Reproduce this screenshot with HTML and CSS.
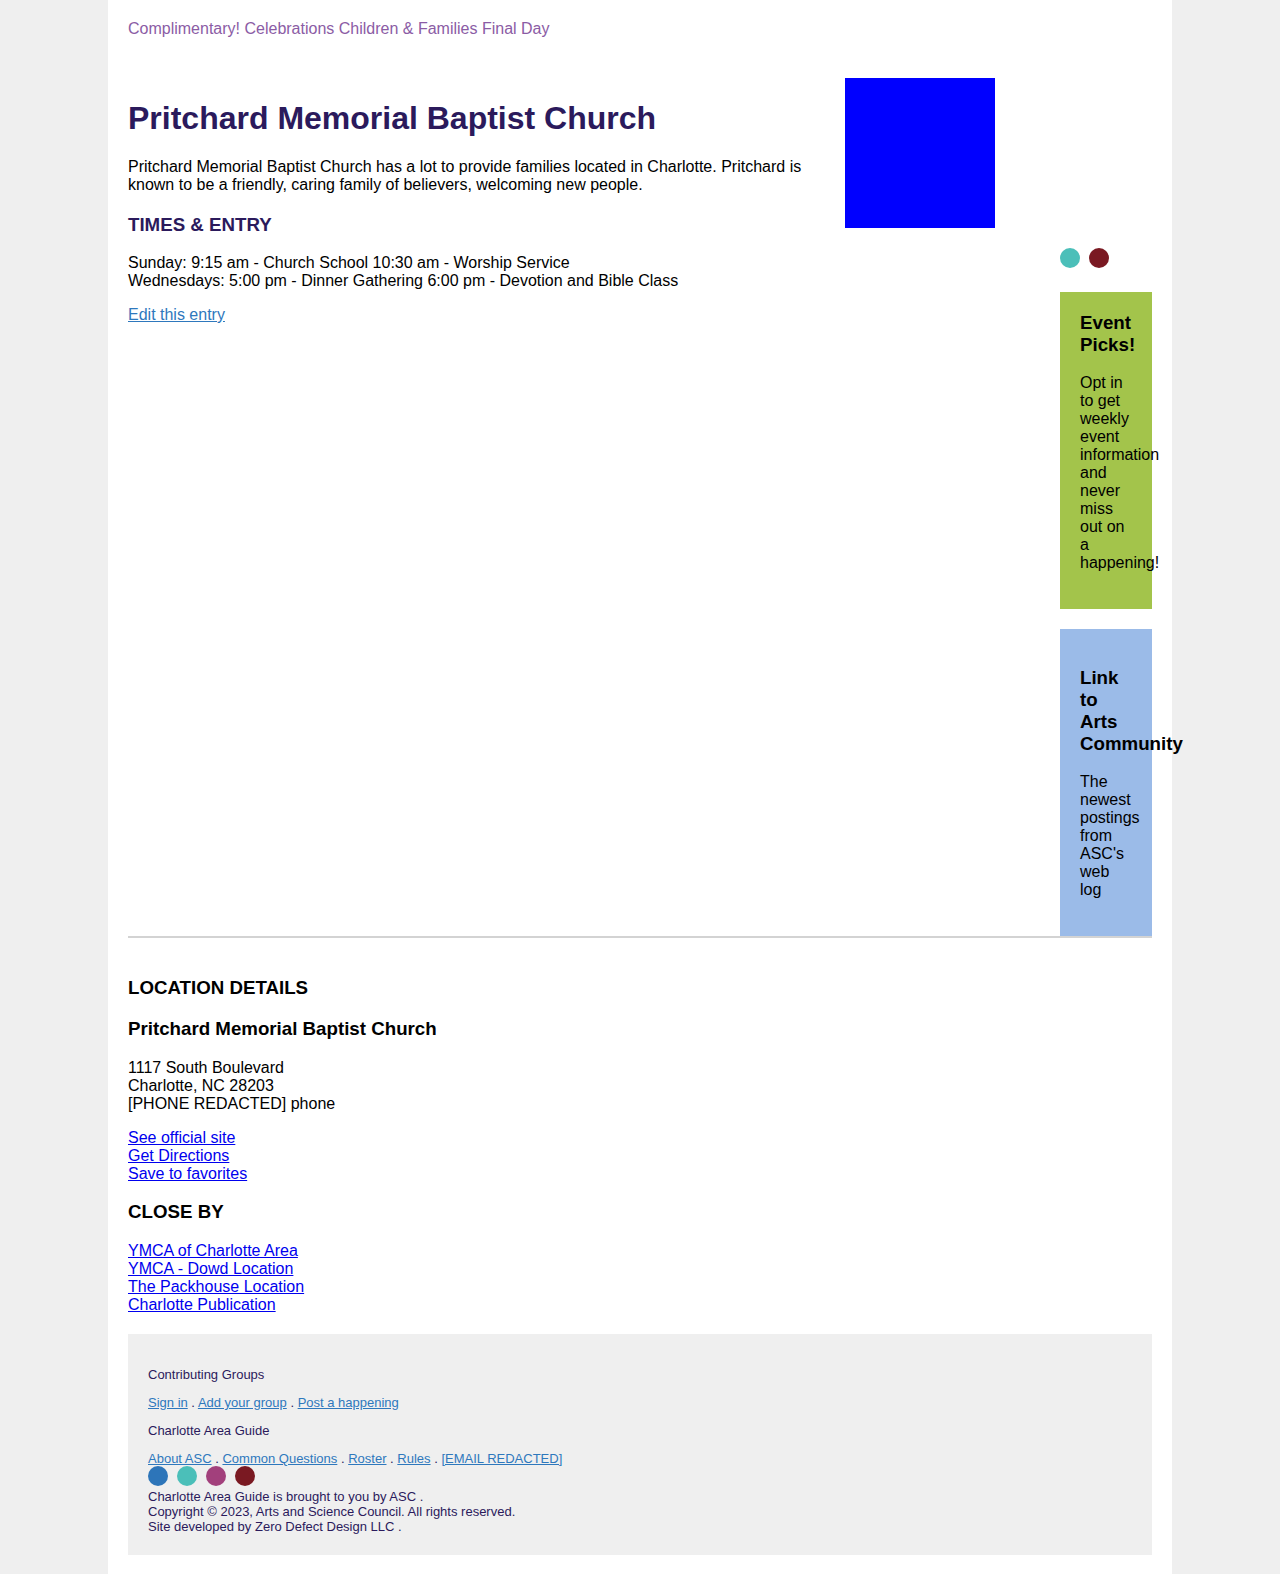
FILE: index.html
```html
<!DOCTYPE html>
<html lang="en">
<head>
<meta charset="utf-8">
<title>Pritchard Memorial Baptist Church</title>
<link rel="stylesheet" href="styles.css">
</head>
<body>
<div class="page">
  <header class="tagline">Complimentary! Celebrations Children &amp; Families Final Day</header>

  <div class="content-row">
    <main class="main">
      <h1 class="title">Pritchard Memorial Baptist Church</h1>
      <p>Pritchard Memorial Baptist Church has a lot to provide families located in Charlotte. Pritchard is known to be a friendly, caring family of believers, welcoming new people.</p>
      <h3 class="section-title">TIMES &amp; ENTRY</h3>
      <p>Sunday: 9:15 am - Church School 10:30 am - Worship Service<br>Wednesdays: 5:00 pm - Dinner Gathering 6:00 pm - Devotion and Bible Class</p>
      <p><a class="soft-link" href="#">Edit this entry</a></p>
    </main>

    <aside class="aside">
      <div class="photo"></div>
      <div class="sidebar">
        <div class="social">
          <span class="dot dot-teal"></span>
          <span class="dot dot-maroon"></span>
        </div>
        <div class="promo promo-green">
          <h3>Event Picks!</h3>
          <p>Opt in to get weekly event information and never miss out on a happening!</p>
        </div>
        <div class="promo promo-blue">
          <h3>Link to Arts Community</h3>
          <p>The newest postings from ASC's web log</p>
        </div>
      </div>
    </aside>
  </div>

  <hr class="divider">

  <section class="location">
    <h3>LOCATION DETAILS</h3>
    <h3>Pritchard Memorial Baptist Church</h3>
    <p>1117 South Boulevard<br>Charlotte, NC 28203<br>[PHONE REDACTED] phone</p>
    <p><a href="#">See official site</a><br><a href="#">Get Directions</a><br><a href="#">Save to favorites</a></p>
    <h3 class="close-by">CLOSE BY</h3>
    <p><a href="#">YMCA of Charlotte Area</a><br><a href="#">YMCA - Dowd Location</a><br><a href="#">The Packhouse Location</a><br><a href="#">Charlotte Publication</a></p>
  </section>

  <footer class="footer">
    <p>Contributing Groups</p>
    <p><a href="#">Sign in</a> . <a href="#">Add your group</a> . <a href="#">Post a happening</a></p>
    <p>Charlotte Area Guide</p>
    <div class="footer-links"><a href="#">About ASC</a> . <a href="#">Common Questions</a> . <a href="#">Roster</a> . <a href="#">Rules</a> . <a href="#">[EMAIL REDACTED]</a></div>
    <div class="footer-social">
      <span class="dot dot-blue"></span>
      <span class="dot dot-teal"></span>
      <span class="dot dot-magenta"></span>
      <span class="dot dot-maroon"></span>
    </div>
    <div class="credits">
      Charlotte Area Guide is brought to you by ASC .<br>
      Copyright © 2023, Arts and Science Council. All rights reserved.<br>
      Site developed by Zero Defect Design LLC .
    </div>
  </footer>
</div>
</body>
</html>
```

FILE: styles.css
```css
html, body {
  margin: 0;
  padding: 0;
}

body {
  background: #efefef;
  font-family: "Liberation Sans", Arial, Helvetica, sans-serif;
  font-size: 16px;
  line-height: 18px;
  color: #000;
}

.page {
  box-sizing: border-box;
  width: 1064px;
  margin: 0 auto;
  padding: 20px;
  background: #fff;
}

.tagline {
  color: #8b5ca5;
  font-size: 16px;
  line-height: 18px;
  margin: 0 0 40px;
}

.content-row {
  display: flex;
  gap: 20px;
}

.main {
  flex: 1;
  min-width: 0;
}

.main p {
  margin: 16px 0;
}

.title {
  margin: 22px 0 22px;
  font-size: 32px;
  line-height: 36px;
  font-weight: bold;
  color: #2b1a5c;
}

.section-title {
  margin: 20px 0 18px;
  font-size: 18.72px;
  line-height: 22px;
  color: #2b1a5c;
}

.soft-link {
  color: #2e78bd;
}

.aside {
  width: 307px;
  flex: 0 0 307px;
  display: flex;
  flex-direction: column;
}

.photo {
  width: 150px;
  height: 150px;
  background: #0000ff;
}

.sidebar {
  width: 92px;
  margin-left: auto;
  margin-top: 20px;
}

.social {
  display: flex;
  gap: 9px;
  margin-bottom: 24px;
}

.dot {
  display: block;
  width: 20px;
  height: 20px;
  border-radius: 50%;
}

.dot-teal { background: #4bbfb9; }
.dot-maroon { background: #7a1922; }
.dot-blue { background: #2d75b9; }
.dot-magenta { background: #a2407c; }

.promo {
  box-sizing: border-box;
  width: 92px;
  padding: 20px 20px 21px;
}

.promo h3 {
  margin: 0 0 18px;
  font-size: 18.72px;
  line-height: 22px;
}

.promo p {
  margin: 0 0 16px;
}

.promo-green {
  background: #a3c44b;
}

.promo-blue {
  background: #9bbbe8;
  margin-top: 20px;
}

.promo-blue h3 {
  margin-top: 18px;
}

.promo-blue p {
  margin-top: 1px;
}

.divider {
  margin: 0;
  border: 0;
  border-top: 2px solid #d3d3d3;
  height: 0;
}

.location {
  padding-top: 20px;
}

.location h3 {
  margin: 19px 0;
  font-size: 18.72px;
  line-height: 22px;
}

.location .close-by {
  margin-top: 18px;
}

.location p {
  margin: 16px 0;
}

.location a {
  color: #0000ee;
}

.footer {
  margin-top: 20px;
  padding: 20px 20px 21px;
  background: #efefef;
  color: #2b1a5c;
  font-size: 13px;
  line-height: 15px;
}

.footer p {
  margin: 13px 0;
}

.footer a {
  color: #2e78bd;
}

.footer-links {
  margin-top: 13px;
}

.footer-social {
  display: flex;
  gap: 9px;
  margin-bottom: 3px;
}
```
